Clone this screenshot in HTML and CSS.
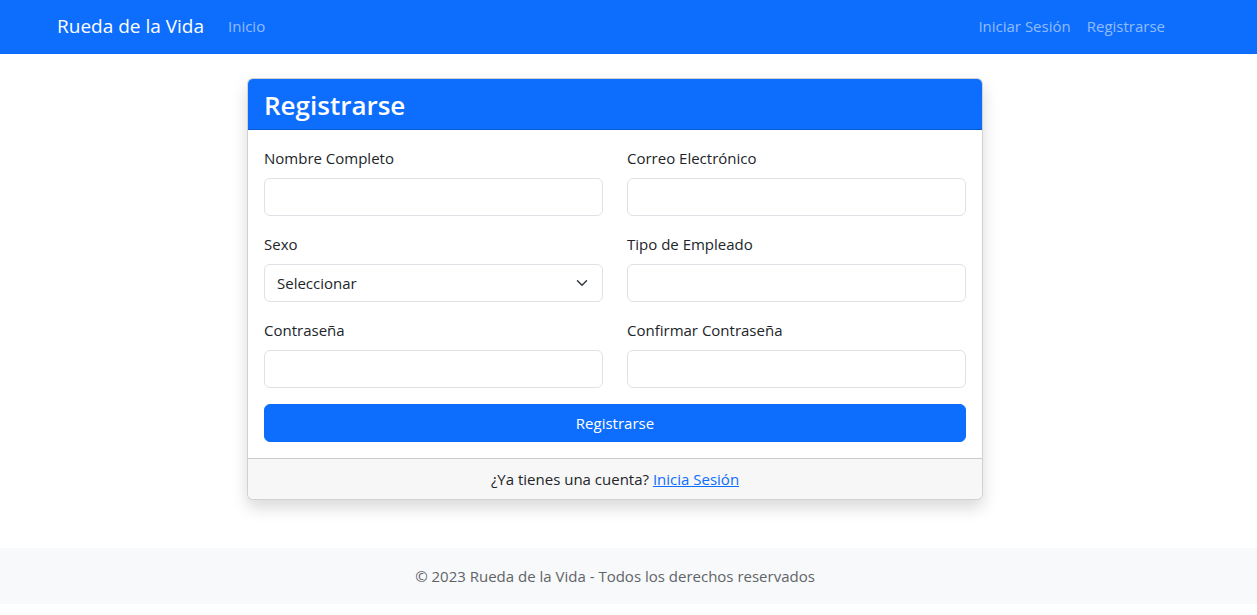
FILE: index.html
```html
<!DOCTYPE html>
<html lang="es">
<head>
<meta charset="utf-8">
<meta name="viewport" content="width=device-width, initial-scale=1">
<title>Registrarse - Rueda de la Vida</title>
<link rel="stylesheet" href="styles.css">
</head>
<body>
<header class="navbar">
  <nav class="container navbar-inner">
    <a class="brand" href="#">Rueda de la Vida</a>
    <a class="nav-link" href="#">Inicio</a>
    <div class="nav-end">
      <a class="nav-link" href="#">Iniciar Sesión</a>
      <a class="nav-link" href="#">Registrarse</a>
    </div>
  </nav>
</header>
<main class="main">
  <div class="container">
    <section class="card">
      <div class="card-header"><h1 class="card-title">Registrarse</h1></div>
      <form class="card-body">
        <div class="fields">
          <div class="field">
            <label for="nombre">Nombre Completo</label>
            <input class="control" id="nombre" type="text">
          </div>
          <div class="field">
            <label for="correo">Correo Electrónico</label>
            <input class="control" id="correo" type="email">
          </div>
          <div class="field">
            <label for="sexo">Sexo</label>
            <div class="select-wrap">
              <select class="control select" id="sexo">
                <option>Seleccionar</option>
                <option>Femenino</option>
                <option>Masculino</option>
              </select>
              <svg class="chevron" viewBox="0 0 16 16" aria-hidden="true"><path d="m2 5 6 6 6-6"/></svg>
            </div>
          </div>
          <div class="field">
            <label for="tipo">Tipo de Empleado</label>
            <input class="control" id="tipo" type="text">
          </div>
          <div class="field">
            <label for="clave">Contraseña</label>
            <input class="control" id="clave" type="password">
          </div>
          <div class="field">
            <label for="confirmar">Confirmar Contraseña</label>
            <input class="control" id="confirmar" type="password">
          </div>
        </div>
        <button class="submit" type="submit">Registrarse</button>
      </form>
      <div class="card-footer">¿Ya tienes una cuenta? <a class="link" href="#">Inicia Sesión</a></div>
    </section>
  </div>
</main>
<footer class="footer">© 2023 Rueda de la Vida - Todos los derechos reservados</footer>
</body>
</html>
```
FILE: styles.css
```css
*, *::before, *::after { box-sizing: border-box; }
:root { --gutter-end: 27px; }
body {
  margin: 0;
  font-family: "Segoe UI", "Open Sans", "Noto Sans", sans-serif;
  font-size: 15px;
  line-height: 24px;
  color: #212529;
  background: #fff;
}
.container {
  width: 100%;
  max-width: 1140px;
  margin: 0 auto;
  padding: 0 12px;
}
.navbar { background: #0d6efd; padding: 7px var(--gutter-end) 9px 0; }
.navbar-inner { display: flex; align-items: center; }
.brand {
  margin-right: 16px;
  padding: 4px 0;
  font-size: 19px;
  line-height: 30px;
  color: #fff;
  text-decoration: none;
}
.nav-link { padding: 7px 8px; color: rgba(255, 255, 255, .55); text-decoration: none; }
.nav-end { display: flex; margin-left: auto; }
.main { padding: 24px var(--gutter-end) 48px 0; }
.card {
  max-width: 736px;
  margin: 0 auto;
  border: 1px solid rgba(0, 0, 0, .175);
  border-radius: 6px;
  background: #fff;
  box-shadow: 0 8px 16px rgba(0, 0, 0, .15);
}
.card-header {
  padding: 9px 16px 7px;
  color: #fff;
  background: #0d6efd;
  border-bottom: 1px solid rgba(0, 0, 0, .175);
  border-radius: 5px 5px 0 0;
}
.card-title { margin: 0; font-size: 26px; line-height: 34px; font-weight: 600; }
.card-body { padding: 16px; }
.fields { display: grid; grid-template-columns: 1fr 1fr; gap: 16px 24px; }
.field { display: flex; flex-direction: column; gap: 8px; }
.control {
  width: 100%;
  height: 38px;
  padding: 6px 12px;
  border: 1px solid #dee2e6;
  border-radius: 6px;
  font: inherit;
  color: #212529;
  background: #fff;
}
.select-wrap { position: relative; }
.select { display: block; appearance: none; padding-right: 36px; }
.chevron {
  position: absolute;
  top: 13px;
  right: 13px;
  width: 16px;
  height: 12px;
  fill: none;
  stroke: #343a40;
  stroke-width: 2;
  stroke-linecap: round;
  stroke-linejoin: round;
  pointer-events: none;
}
.submit {
  display: block;
  width: 100%;
  height: 38px;
  margin-top: 16px;
  padding: 6px 12px;
  border: 1px solid #0d6efd;
  border-radius: 6px;
  font: inherit;
  color: #fff;
  background: #0d6efd;
}
.card-footer {
  padding: 8px 16px;
  text-align: center;
  background: #f7f7f7;
  border-top: 1px solid rgba(0, 0, 0, .175);
  border-radius: 0 0 5px 5px;
}
.link { color: #0d6efd; text-decoration: underline; }
.footer { padding: 16px var(--gutter-end) 16px 0; text-align: center; color: #5f6469; background: #f8f9fa; }
```
